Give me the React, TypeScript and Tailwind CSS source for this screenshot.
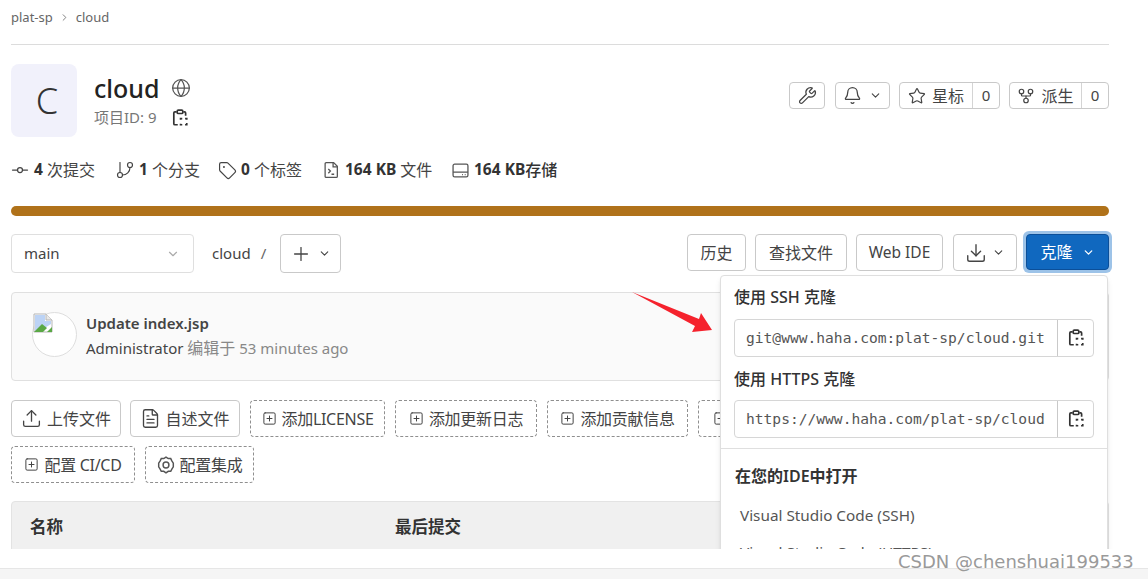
import * as React from 'react';
import {
  Bell,
  ChevronDown,
  ChevronRight,
  Download,
  FileText,
  GitBranch,
  GitCommitHorizontal,
  GitFork,
  Globe,
  Plus,
  SquarePlus,
  Star,
  Tag,
  Upload,
  Wrench
} from 'lucide-react';

const iconClass = 'text-[#444] shrink-0';

function CopyIcon(): React.JSX.Element {
  return (
    <svg width="18" height="18" viewBox="0 0 16 16" fill="none" stroke="#333" strokeWidth="1.5" className="shrink-0">
      <path d="M5 2.500H3.500a1 1 0 0 0-1 1V13a1 1 0 0 0 1 1H6" />
      <path d="M11 2.500h1a1 1 0 0 1 1 1V6" />
      <rect x="5.500" y="1" width="5" height="3" rx="1" />
      <path d="M8.500 9.500V8.500h1.500M12.500 8.500H14v1M14 12.500V14h-1.500M10 14H8.500v-1" />
    </svg>
  );
}

function FileTerminalIcon(): React.JSX.Element {
  return (
    <svg width="17" height="18" viewBox="0 0 16 16" fill="none" stroke="#555" strokeWidth="1.2" className="shrink-0">
      <path d="M3 1h7l3.500 3.500V14a1 1 0 0 1-1 1H3a1 1 0 0 1-1-1V2a1 1 0 0 1 1-1z" />
      <path d="M9.500 1v4h4M5 7l2 2-2 2M8 12h2.500" />
    </svg>
  );
}

function StorageIcon(): React.JSX.Element {
  return (
    <svg width="17" height="17" viewBox="0 0 16 16" fill="none" stroke="#555" strokeWidth="1.2" className="shrink-0">
      <rect x="1" y="2" width="14" height="12" rx="1.500" />
      <path d="M1 9.500h14M9.500 11.800h.8M12 11.800h.8" />
    </svg>
  );
}

function GearIcon(): React.JSX.Element {
  return (
    <svg width="18" height="18" viewBox="0 0 16 16" fill="none" stroke="#555" strokeWidth="1.3" className="shrink-0">
      <path d="M8 1l2 1.300h2.200l1 2L14.500 6.400v3.200l-1.300 2-1 2H10L8 15l-2-1.400H3.800l-1-2-1.300-2V6.400l1.300-2.100 1-2H6z" />
      <circle cx="8" cy="8" r="2.600" />
    </svg>
  );
}

function BrokenImage(): React.JSX.Element {
  return (
    <svg width="20" height="20" viewBox="0 0 20 20" className="absolute left-0 top-0">
      <path d="M1 1h12l6 6v12H1z" fill="#fff" stroke="#b5b5b5" />
      <path d="M13 1v6h6" fill="#e8e8e8" stroke="#b5b5b5" />
      <path d="M2 2h10v6h6v3l-8 5-8 2z" fill="#bcd3f5" />
      <path d="M1 19l8-8 5 4-4 4z" fill="#5aa845" />
      <path d="M14 19l5-5v5z" fill="#5aa845" />
    </svg>
  );
}

function SolidButton({
  className,
  children
}: {
  className: string;
  children: React.ReactNode;
}): React.JSX.Element {
  return (
    <div
      className={`flex items-center justify-center rounded border border-[#c9c9c9] bg-white text-[#444] ${className}`}
    >
      {children}
    </div>
  );
}

function DashedButton({
  className,
  label,
  icon
}: {
  className: string;
  label?: string;
  icon?: React.ReactNode;
}): React.JSX.Element {
  return (
    <div
      className={`flex h-[37px] items-center gap-[5px] rounded border border-dashed border-[#8f8f8f] bg-white text-[16px] text-[#444] ${className}`}
    >
      {icon ?? <SquarePlus size={15} strokeWidth={1.6} className={iconClass} />}
      {label && <span className="whitespace-nowrap tracking-[-0.3px]">{label}</span>}
    </div>
  );
}

function CountButton({
  icon,
  label,
  className
}: {
  icon: React.ReactNode;
  label: string;
  className: string;
}): React.JSX.Element {
  return (
    <div className={`flex h-[27px] rounded border border-[#c9c9c9] bg-white text-[16px] text-[#444] ${className}`}>
      <div className="flex flex-1 items-center justify-center gap-[6px] border-r border-[#d4d4d4]">
        {icon}
        <span>{label}</span>
      </div>
      <div className="flex w-[26px] items-center justify-center text-[15px]">0</div>
    </div>
  );
}

function Stat({
  icon,
  value,
  label,
  className
}: {
  icon: React.ReactNode;
  value: string;
  label: string;
  className: string;
}): React.JSX.Element {
  return (
    <div className={`flex items-center whitespace-nowrap text-[#333] ${className}`}>
      <span className="flex w-[18px] shrink-0 justify-center">{icon}</span>
      <span className="ml-[5px] text-[15.500px] font-bold">{value}</span>
      <span className="ml-[4px] text-[16px] text-[#444]">{label}</span>
    </div>
  );
}

function CloneField({ url }: { url: string }): React.JSX.Element {
  return (
    <div className="flex h-[38px] w-[360px] rounded border border-[#d6d6d6] bg-white">
      <div className="flex min-w-0 flex-1 items-center overflow-hidden whitespace-nowrap pl-[11px] font-['DejaVu_Sans_Mono',monospace] text-[14.600px] text-[#555]">
        {url}
      </div>
      <div className="flex w-[36px] items-center justify-center border-l border-[#c9c9c9]">
        <CopyIcon />
      </div>
    </div>
  );
}

export default function App(): React.JSX.Element {
  return (
    <div className="flex h-[579px] w-[1148px] flex-col overflow-hidden bg-white font-['Noto_Sans','Noto_Sans_CJK_SC',sans-serif] text-[#333]">
      <main className="relative h-[549px] shrink-0 overflow-hidden pl-[11px]">
        <div className="flex h-[45px] w-[1098px] items-center gap-[6px] border-b border-[#dcdcdc] pb-[9px] text-[13px] text-[#666]">
          <span>plat-sp</span>
          <ChevronRight size={11} className="text-[#777]" />
          <span>cloud</span>
        </div>

        <div className="mt-[19px] flex h-[73px] w-[1098px]">
          <div className="flex w-[66px] items-center justify-center rounded-lg bg-[#f1f1fb] pl-[6px] text-[36px] font-light text-[#333]">
            C
          </div>
          <div className="ml-[17px] pt-[7px]">
            <div className="flex h-[34px] items-center">
              <span className="text-[25px] font-medium leading-none text-[#222]">cloud</span>
              <Globe size={20} strokeWidth={1.5} className="ml-[12px] text-[#555]" />
            </div>
            <div className="flex h-[24px] items-center text-[15px] text-[#777]">
              <span>项目ID: 9</span>
              <span className="ml-[14px] mt-[2px]">
                <CopyIcon />
              </span>
            </div>
          </div>
          <div className="ml-auto mt-[18px] flex items-start gap-[9px]">
            <SolidButton className="mr-px h-[27px] w-[36px]">
              <Wrench size={19} strokeWidth={1.6} />
            </SolidButton>
            <SolidButton className="h-[27px] w-[55px] gap-[7px]">
              <Bell size={19} strokeWidth={1.6} />
              <ChevronDown size={13} strokeWidth={2} />
            </SolidButton>
            <CountButton className="w-[101px]" icon={<Star size={18} strokeWidth={1.6} />} label="星标" />
            <CountButton className="w-[100px]" icon={<GitFork size={18} strokeWidth={1.6} />} label="派生" />
          </div>
        </div>

        <div className="mt-[23px] flex h-[20px] items-center">
          <Stat className="w-[105px]" icon={<GitCommitHorizontal size={20} strokeWidth={1.5} className={iconClass} />} value="4" label="次提交" />
          <Stat className="w-[102px]" icon={<GitBranch size={20} strokeWidth={1.4} className={iconClass} />} value="1" label="个分支" />
          <Stat className="w-[104px]" icon={<Tag size={19} strokeWidth={1.5} className={iconClass} />} value="0" label="个标签" />
          <Stat className="w-[130px]" icon={<FileTerminalIcon />} value="164 KB" label="文件" />
          <div className="flex items-center whitespace-nowrap">
            <StorageIcon />
            <span className="ml-[5px] text-[15.500px] font-bold">164 KB</span>
            <span className="text-[16px] font-medium">存储</span>
          </div>
        </div>

        <div className="mt-[26px] h-[10px] w-[1098px] rounded-full bg-[#b0721a]" />

        <div className="mt-[18px] flex h-[39px] w-[1098px] items-start text-[15px] text-[#444]">
          <div className="flex h-[39px] w-[183px] items-center justify-between rounded border border-[#dfdfdf] pl-[12px] pr-[13px]">
            <span>main</span>
            <ChevronDown size={14} className="text-[#aaa]" />
          </div>
          <span className="ml-[18px] flex h-[39px] items-center">cloud</span>
          <span className="ml-[10px] flex h-[39px] items-center text-[#666]">/</span>
          <SolidButton className="ml-[14px] h-[39px] w-[61px] gap-[6px]">
            <Plus size={22} strokeWidth={1.4} />
            <ChevronDown size={13} strokeWidth={2} />
          </SolidButton>
          <div className="ml-auto flex items-start gap-[9px] text-[16px]">
            <SolidButton className="h-[37px] w-[59px]">历史</SolidButton>
            <SolidButton className="h-[37px] w-[92px]">查找文件</SolidButton>
            <SolidButton className="mr-px h-[37px] w-[87px] text-[15.500px]">Web IDE</SolidButton>
            <SolidButton className="h-[37px] w-[64px] gap-[5px]">
              <Download size={22} strokeWidth={1.5} />
              <ChevronDown size={13} strokeWidth={2} />
            </SolidButton>
            <div className="-m-[3px] rounded-md bg-[#9dc3e8] p-[3px]">
              <div className="flex h-[36px] w-[83px] items-center justify-center gap-[9px] rounded border border-[#0b4f99] bg-[#1068bf] text-white">
                <span>克隆</span>
                <ChevronDown size={13} strokeWidth={2.4} />
              </div>
            </div>
          </div>
        </div>

        <div className="mt-[19px] flex h-[89px] w-[1098px] items-start rounded border border-[#e0e0e0] bg-[#fafafa] pl-[20px] pt-[19px]">
          <div className="relative h-[45px] w-[45px] rounded-full border border-[#dedede] bg-white">
            <BrokenImage />
          </div>
          <div className="ml-[9px] mt-[-1px]">
            <div className="text-[15px] font-semibold leading-[24px] text-[#444]">Update index.jsp</div>
            <div className="mt-px whitespace-nowrap text-[15px] leading-[24px] text-[#888]">
              <span className="text-[#444]">Administrator</span> <span className="text-[16px]">编辑于</span> 53 minutes ago
            </div>
          </div>
        </div>

        <div className="mt-[19px] flex gap-[9px]">
          <SolidButton className="h-[37px] w-[110px] gap-[5px] text-[16px]">
            <Upload size={21} strokeWidth={1.5} />
            上传文件
          </SolidButton>
          <SolidButton className="mr-px h-[37px] w-[110px] gap-[4px] text-[16px]">
            <FileText size={21} strokeWidth={1.5} />
            自述文件
          </SolidButton>
          <DashedButton className="mr-px w-[135px] justify-center" label="添加LICENSE" />
          <DashedButton className="mr-px w-[142px] justify-center" label="添加更新日志" />
          <DashedButton className="mr-px w-[141px] justify-center" label="添加贡献信息" />
          <DashedButton className="w-[160px] pl-[14px]" />
        </div>
        <div className="mt-[9px] flex gap-[10px]">
          <DashedButton className="w-[124px] justify-center" label="配置 CI/CD" />
          <DashedButton className="w-[109px] justify-center" label="配置集成" icon={<GearIcon />} />
        </div>

        <div className="mt-[18px] flex h-[60px] w-[1098px] items-start rounded-t border border-[#e3e3e3] bg-[#f0f0f0] pt-[13px] text-[16.500px] font-semibold text-[#333]">
          <span className="ml-[18px] w-[365px]">名称</span>
          <span>最后提交</span>
        </div>

        {/* clone dropdown */}
        <div className="absolute left-[720px] top-[275px] h-[320px] w-[388px] rounded border border-[#dfdfdf] bg-white shadow-md">
          <div className="px-[13px] pt-[10px]">
            <div className="text-[16px] font-medium leading-[22px] text-[#333]">使用 SSH 克隆</div>
            <div className="mt-[11px]">
              <CloneField url="git@www.haha.com:plat-sp/cloud.git" />
            </div>
            <div className="mt-[11px] text-[16px] font-medium leading-[22px] text-[#333]">使用 HTTPS 克隆</div>
            <div className="mt-[10px]">
              <CloneField url="https://www.haha.com/plat-sp/cloud" />
            </div>
          </div>
          <div className="mt-[10px] border-t border-[#dfdfdf]" />
          <div className="pl-[14px] pt-[16px] text-[16px] font-semibold leading-[22px] text-[#333]">在您的IDE中打开</div>
          <div className="pl-[19px] pt-[17px] text-[15.300px] leading-[22px] text-[#555]">Visual Studio Code (SSH)</div>
          <div className="pl-[19px] pt-[15px] text-[15.300px] leading-[22px] text-[#555]">Visual Studio Code (HTTPS)</div>
        </div>

        <svg width="90" height="50" viewBox="0 0 90 50" className="absolute left-[625px] top-[288px]">
          <path d="M7 4L74 31 76 25 87 42 67 44 70 38z" fill="#f5222d" />
        </svg>
      </main>

      <div className="h-[19px] shrink-0 bg-white" />
      <div className="flex-1 border-t border-[#e6e6e6] bg-[#f5f5f5]" />

      <div className="absolute left-[898px] top-[551px] whitespace-nowrap font-['DejaVu_Sans',sans-serif] text-[18px] leading-[22px] text-[#9a9a9a]">
        CSDN @chenshuai199533
      </div>
    </div>
  );
}
